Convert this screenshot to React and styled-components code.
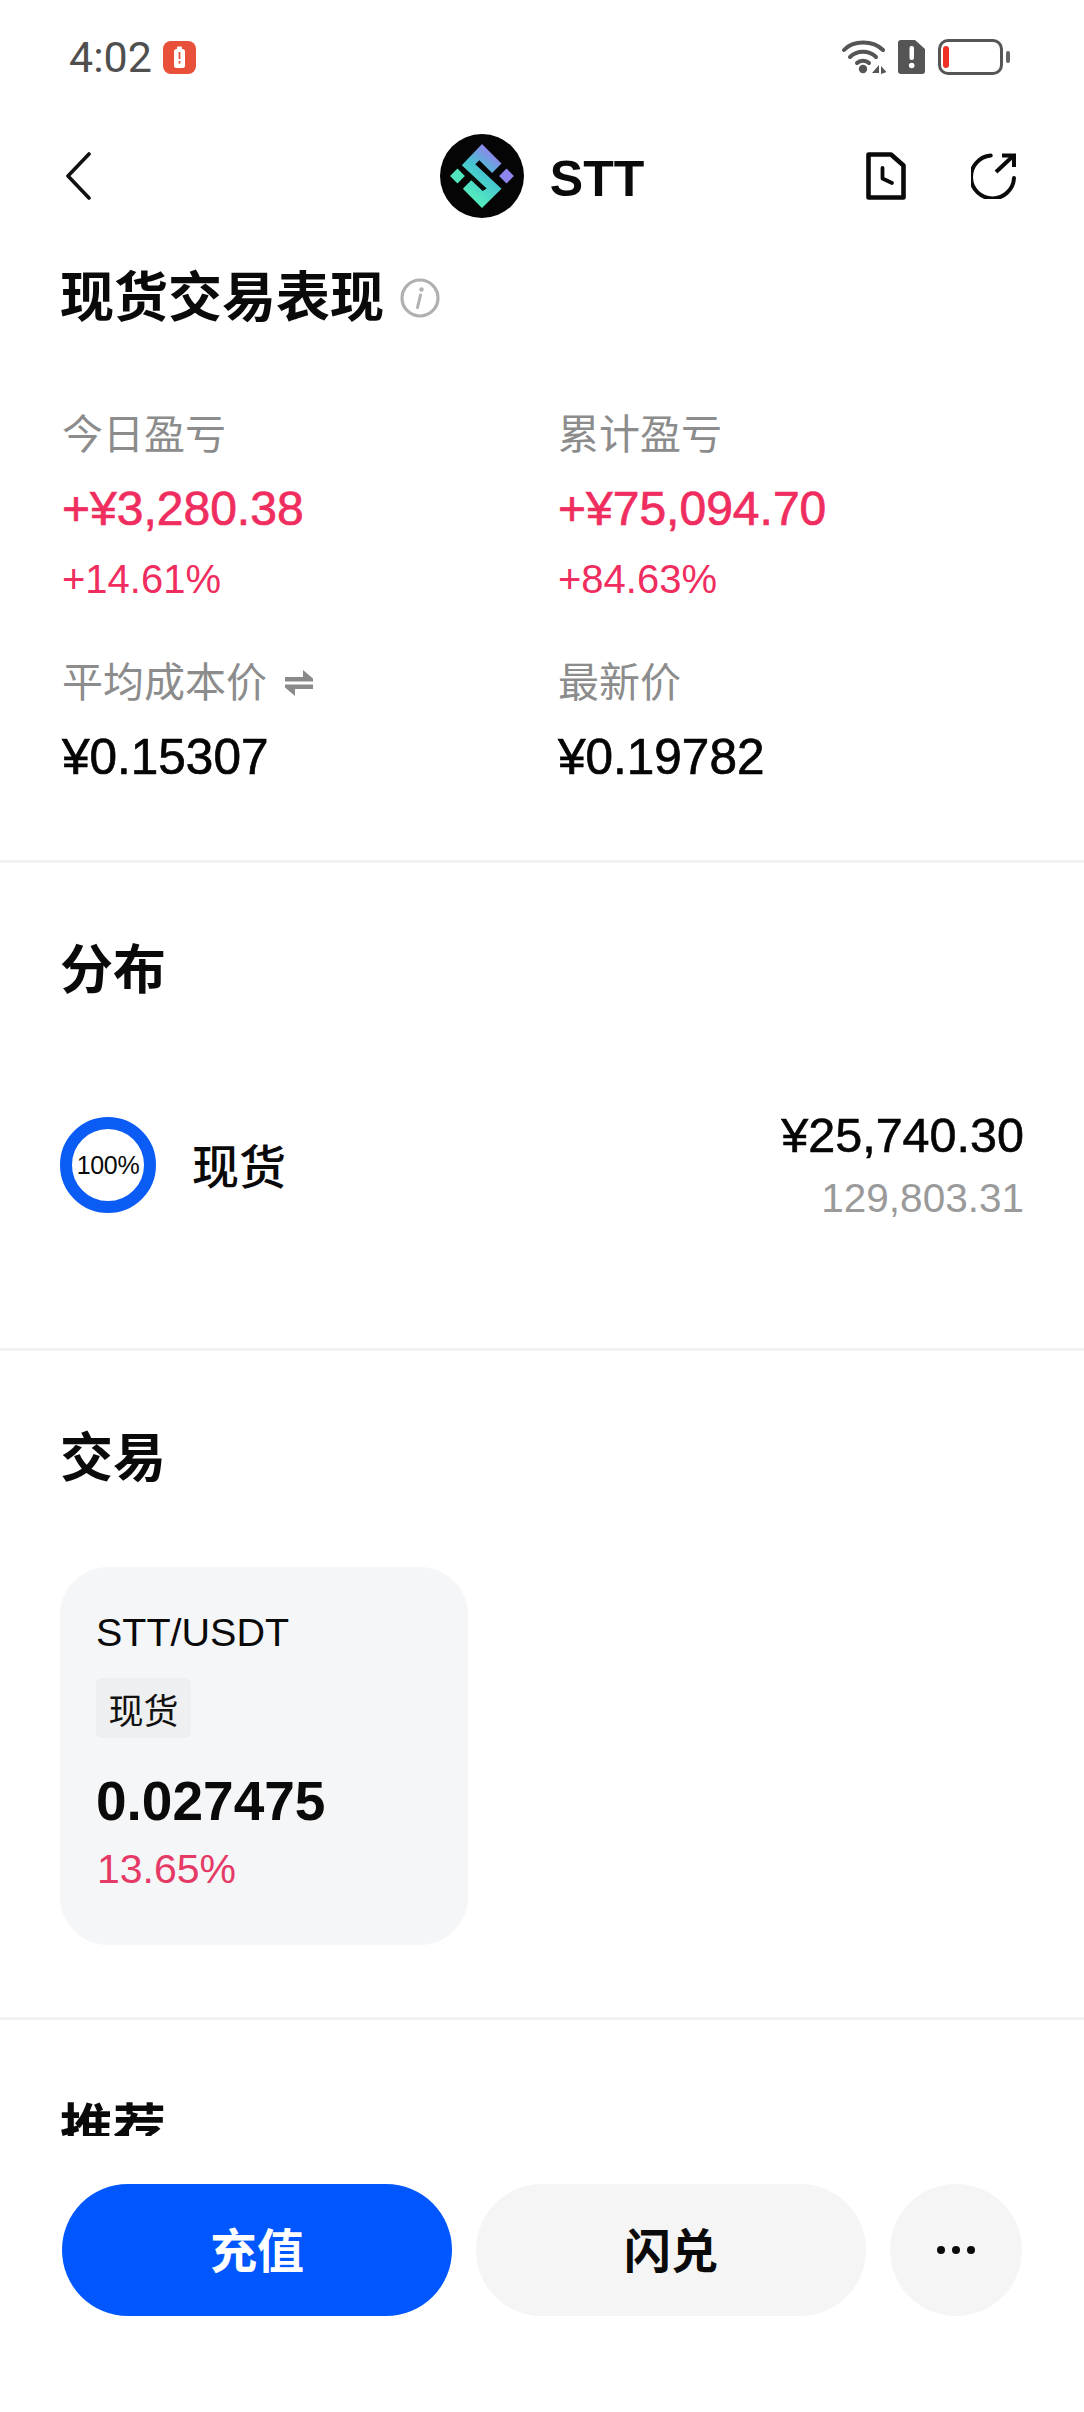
import React from 'react';
import styled, { createGlobalStyle } from 'styled-components';

const latin = '"Liberation Sans", "Noto Sans CJK SC", sans-serif';
const RED = '#ef2d5e';

function App() {
  return (
    <Page>
      <GlobalStyle />
      <Scroll>
        <StatusBar>
          <StatusLeft>
            <Time>4:02</Time>
            <AlertBadge>
              <svg width="33" height="33" viewBox="0 0 33 33">
                <rect x="11" y="8" width="11" height="19" rx="2.5" fill="#fff" />
                <rect x="14" y="5.5" width="5" height="3" rx="1" fill="#fff" />
                <rect x="15.6" y="11" width="1.8" height="7" fill="#e8503a" />
                <rect x="15.6" y="20" width="1.8" height="2.6" fill="#e8503a" />
              </svg>
            </AlertBadge>
          </StatusLeft>
          <StatusRight>
            <svg width="44" height="36" viewBox="0 0 44 36" fill="none" stroke="#555" strokeWidth="4" strokeLinecap="round">
              <path d="M2 11C11 1 31 1 41 11" />
              <path d="M8 18C15 11 27 11 34 18" />
              <path d="M15 24C18 21 24 21 27 24" />
              <circle cx="21" cy="30" r="4.2" fill="#555" stroke="none" />
              <path d="M37 26V34H30Z M39 35V27L44.5 33Z" fill="#555" stroke="none" />
            </svg>
            <SimIcon>
              <svg width="27" height="34" viewBox="0 0 27 34">
                <path d="M3 0H17L27 9V31A3 3 0 0 1 24 34H3A3 3 0 0 1 0 31V3A3 3 0 0 1 3 0Z" fill="#555" />
                <rect x="11.5" y="6" width="4.5" height="14" rx="2" fill="#fff" />
                <circle cx="13.7" cy="25.5" r="2.8" fill="#fff" />
              </svg>
            </SimIcon>
            <Battery>
              <BatteryLevel />
            </Battery>
            <BatteryTip />
          </StatusRight>
        </StatusBar>

        <NavBar>
          <NavBack>
            <svg width="30" height="48" viewBox="0 0 30 48" fill="none" stroke="#111" strokeWidth="3.6" strokeLinecap="round" strokeLinejoin="round">
              <path d="M26 2L5 24L26 46" />
            </svg>
          </NavBack>
          <NavCenter>
            <svg width="84" height="84" viewBox="60 42 250 250">
              <defs>
                <linearGradient id="sttGrad" x1="0.75" y1="0.05" x2="0.3" y2="0.95">
                  <stop offset="0" stopColor="#9a7cf0" />
                  <stop offset="0.45" stopColor="#45c4d0" />
                  <stop offset="1" stopColor="#55f2ba" />
                </linearGradient>
              </defs>
              <circle cx="185" cy="167" r="125" fill="#050505" />
              <path d="M185 72L243 130L215 158L177 120L165 132L243 205L185 262L128 205L153 180L187 212L199 204L125 135Z" fill="url(#sttGrad)" />
              <path d="M112 145L134 167L112 189L90 167Z" fill="#52e6bf" />
              <path d="M258 145L280 167L258 189L236 167Z" fill="#8d86ee" />
            </svg>
            <CoinName>STT</CoinName>
          </NavCenter>
          <NavActions>
            <svg width="40" height="48" viewBox="0 0 40 48" fill="none" stroke="#0a0a0a" strokeWidth="4.6" strokeLinejoin="round">
              <path d="M2.5 2.5H25L37.5 13.5V45.5H2.5Z" />
              <path d="M16.5 16V26.5L26 31" strokeLinecap="round" strokeWidth="3.8" />
            </svg>
            <svg width="46" height="46" viewBox="0 0 46 46" fill="none" stroke="#0a0a0a" strokeWidth="4">
              <path d="M19.7 2.5A21.5 21.5 0 1 0 43 25" strokeLinecap="round" />
              <path d="M25 19L41 4" />
              <path d="M31 2.5H43V14" strokeLinejoin="miter" />
            </svg>
          </NavActions>
        </NavBar>

        <Performance>
          <TitleRow>
            <PageTitle>现货交易表现</PageTitle>
            <svg width="40" height="40" viewBox="0 0 40 40" fill="none">
              <circle cx="20" cy="20" r="18" stroke="#b0b0b0" strokeWidth="3.2" />
              <circle cx="21.5" cy="11.5" r="2.2" fill="#b0b0b0" />
              <path d="M20.5 17L17.5 29.5" stroke="#b0b0b0" strokeWidth="3" strokeLinecap="round" />
            </svg>
          </TitleRow>
          <StatsGrid>
            <StatColumn>
              <StatLabel>今日盈亏</StatLabel>
              <StatValue $red>+¥3,280.38</StatValue>
              <StatPercent>+14.61%</StatPercent>
            </StatColumn>
            <StatColumn>
              <StatLabel>累计盈亏</StatLabel>
              <StatValue $red>+¥75,094.70</StatValue>
              <StatPercent>+84.63%</StatPercent>
            </StatColumn>
            <StatColumn>
              <StatLabel>
                平均成本价
                <svg width="28" height="28" viewBox="0 0 28 28" fill="#8a8a8a">
                  <path d="M0 8H18V1L28 9.5V12.5H0Z" />
                  <path d="M28 15.5V20H10V27L0 18.5V15.5Z" />
                </svg>
              </StatLabel>
              <StatValue>¥0.15307</StatValue>
            </StatColumn>
            <StatColumn>
              <StatLabel>最新价</StatLabel>
              <StatValue>¥0.19782</StatValue>
            </StatColumn>
          </StatsGrid>
        </Performance>

        <Section $pad={125}>
          <SectionTitle>分布</SectionTitle>
          <DistRow>
            <DistLeft>
              <Ring>100%</Ring>
              <DistName>现货</DistName>
            </DistLeft>
            <DistRight>
              <DistAmount>¥25,740.30</DistAmount>
              <DistQty>129,803.31</DistQty>
            </DistRight>
          </DistRow>
        </Section>

        <Section $pad={72}>
          <SectionTitle>交易</SectionTitle>
          <PairCard>
            <PairName>STT/USDT</PairName>
            <PairTag>现货</PairTag>
            <PairPrice>0.027475</PairPrice>
            <PairChange>13.65%</PairChange>
          </PairCard>
        </Section>

        <LastSection>
          <SectionTitle>推荐</SectionTitle>
        </LastSection>
      </Scroll>

      <BottomBar>
        <ActionButton $primary>充值</ActionButton>
        <ActionButton>闪兑</ActionButton>
        <MoreButton>
          <svg width="40" height="10" viewBox="0 0 40 10" fill="#0a0a0a">
            <circle cx="5" cy="5" r="4" />
            <circle cx="20" cy="5" r="4" />
            <circle cx="35" cy="5" r="4" />
          </svg>
        </MoreButton>
      </BottomBar>
    </Page>
  );
}

export default App;

const GlobalStyle = createGlobalStyle`
  body {
    margin: 0;
    background: #fff;
    font-family: ${latin};
  }
`;
const Page = styled.div`
  width: 1084px;
  height: 2412px;
  display: flex;
  flex-direction: column;
  background: #fff;
`;
const Scroll = styled.div`
  height: 2136px;
  overflow: hidden;
`;
const StatusBar = styled.div`
  height: 110px;
  padding: 4px 74px 0 69px;
  box-sizing: border-box;
  display: flex;
  justify-content: space-between;
  align-items: center;
`;
const StatusLeft = styled.div`
  display: flex;
  align-items: center;
  gap: 11px;
`;
const Time = styled.span`
  font-family: Roboto, sans-serif;
  font-size: 43px;
  color: #4f4f4f;
`;
const AlertBadge = styled.span`
  width: 33px;
  height: 33px;
  border-radius: 8px;
  background: #e8503a;
  display: flex;
`;
const StatusRight = styled.div`
  display: flex;
  align-items: center;
`;
const SimIcon = styled.span`
  display: flex;
  margin: 0 13px 0 12px;
`;
const Battery = styled.span`
  width: 65px;
  height: 36px;
  box-sizing: border-box;
  border: 3px solid #555;
  border-radius: 10px;
  padding: 4px 2px;
  display: flex;
`;
const BatteryLevel = styled.span`
  width: 6px;
  border-radius: 3px;
  background: #ee3124;
`;
const BatteryTip = styled.span`
  width: 4px;
  height: 12px;
  margin-left: 3px;
  border-radius: 2px;
  background: #666;
`;
const NavBar = styled.div`
  height: 132px;
  padding: 0 67px;
  display: grid;
  grid-template-columns: 1fr auto 1fr;
  align-items: center;
`;
const NavBack = styled.div`
  display: flex;
  margin-left: -4px;
`;
const NavCenter = styled.div`
  display: flex;
  align-items: center;
  gap: 26px;
`;
const CoinName = styled.span`
  padding-top: 5px;
  font-size: 50px;
  font-weight: 700;
  color: #0a0a0a;
`;
const NavActions = styled.div`
  display: flex;
  justify-content: flex-end;
  align-items: center;
  gap: 65px;
`;
const Performance = styled.section`
  padding: 21px 62px 78px;
  border-bottom: 3px solid #f2f2f2;
`;
const TitleRow = styled.div`
  display: flex;
  align-items: center;
  gap: 16px;
`;
const PageTitle = styled.h1`
  margin: 0 0 0 -2px;
  font-size: 54px;
  line-height: 70px;
  font-weight: 700;
  color: #0a0a0a;
`;
const StatsGrid = styled.div`
  margin-top: 77px;
  display: grid;
  grid-template-columns: 496px 1fr;
  row-gap: 54px;
`;
const StatColumn = styled.div`
  display: flex;
  flex-direction: column;
`;
const StatLabel = styled.div`
  display: flex;
  align-items: center;
  gap: 18px;
  font-size: 41px;
  line-height: 50px;
  color: #8c8c8c;
`;
const StatValue = styled.div`
  margin-top: 24px;
  font-size: ${(props) => (props.$red ? 48 : 49.5)}px;
  line-height: 50px;
  color: ${(props) => (props.$red ? RED : '#050505')};
  -webkit-text-stroke: 0.7px currentColor;
`;
const StatPercent = styled.div`
  margin-top: 20px;
  font-size: 40px;
  line-height: 50px;
  color: ${RED};
`;
const Section = styled.section`
  padding: 73px 62px ${(props) => props.$pad}px 62px;
  border-bottom: 3px solid #f2f2f2;
`;
const SectionTitle = styled.h2`
  margin: 0 0 0 -2px;
  font-size: 53px;
  line-height: 70px;
  font-weight: 700;
  color: #0a0a0a;
`;
const DistRow = styled.div`
  margin: 101px -2px 0 -2px;
  display: flex;
  justify-content: space-between;
  align-items: center;
`;
const DistLeft = styled.div`
  display: flex;
  align-items: center;
  gap: 36px;
`;
const Ring = styled.div`
  width: 96px;
  height: 96px;
  box-sizing: border-box;
  border: 12px solid #0b5cf5;
  border-radius: 50%;
  display: flex;
  align-items: center;
  justify-content: center;
  font-size: 25px;
  letter-spacing: -0.3px;
  color: #0a0a0a;
`;
const DistName = styled.span`
  padding-bottom: 4px;
  font-size: 47px;
  font-weight: 500;
  color: #0a0a0a;
`;
const DistRight = styled.div`
  padding-top: 3px;
  display: flex;
  flex-direction: column;
  align-items: flex-end;
  gap: 13px;
`;
const DistAmount = styled.div`
  font-size: 48.5px;
  line-height: 50px;
  color: #050505;
  -webkit-text-stroke: 0.6px currentColor;
`;
const DistQty = styled.div`
  font-size: 40.5px;
  line-height: 50px;
  color: #9a9a9a;
`;
const PairCard = styled.div`
  margin: 73px 0 0 -2px;
  width: 408px;
  height: 378px;
  box-sizing: border-box;
  padding: 43px 0 0 36px;
  border-radius: 48px;
  background: #f5f6f8;
  display: flex;
  flex-direction: column;
  align-items: flex-start;
`;
const PairName = styled.div`
  font-size: 39.5px;
  line-height: 44px;
  color: #0a0a0a;
`;
const PairTag = styled.div`
  margin-top: 24px;
  width: 95px;
  height: 60px;
  border-radius: 6px;
  background: #eeeff0;
  display: flex;
  align-items: center;
  justify-content: center;
  font-size: 35px;
  color: #111;
`;
const PairPrice = styled.div`
  margin-top: 33px;
  font-size: 55px;
  font-weight: 700;
  line-height: 60px;
  color: #0a0a0a;
`;
const PairChange = styled.div`
  margin: 16px 0 0 1px;
  font-size: 41px;
  line-height: 44px;
  color: #e63a66;
`;
const LastSection = styled.section`
  padding: 75px 62px 0;
`;
const BottomBar = styled.div`
  padding: 48px 62px 0;
  display: flex;
  gap: 24px;
`;
const ActionButton = styled.button`
  width: 390px;
  height: 132px;
  padding: 0 0 6px;
  border: 0;
  border-radius: 66px;
  background: ${(props) => (props.$primary ? '#0057ff' : '#f5f5f5')};
  color: ${(props) => (props.$primary ? '#fff' : '#0a0a0a')};
  font-family: ${latin};
  font-size: 47px;
  font-weight: 700;
`;
const MoreButton = styled.button`
  width: 132px;
  height: 132px;
  padding: 0;
  border: 0;
  border-radius: 50%;
  background: #f5f5f5;
  display: flex;
  align-items: center;
  justify-content: center;
`;
